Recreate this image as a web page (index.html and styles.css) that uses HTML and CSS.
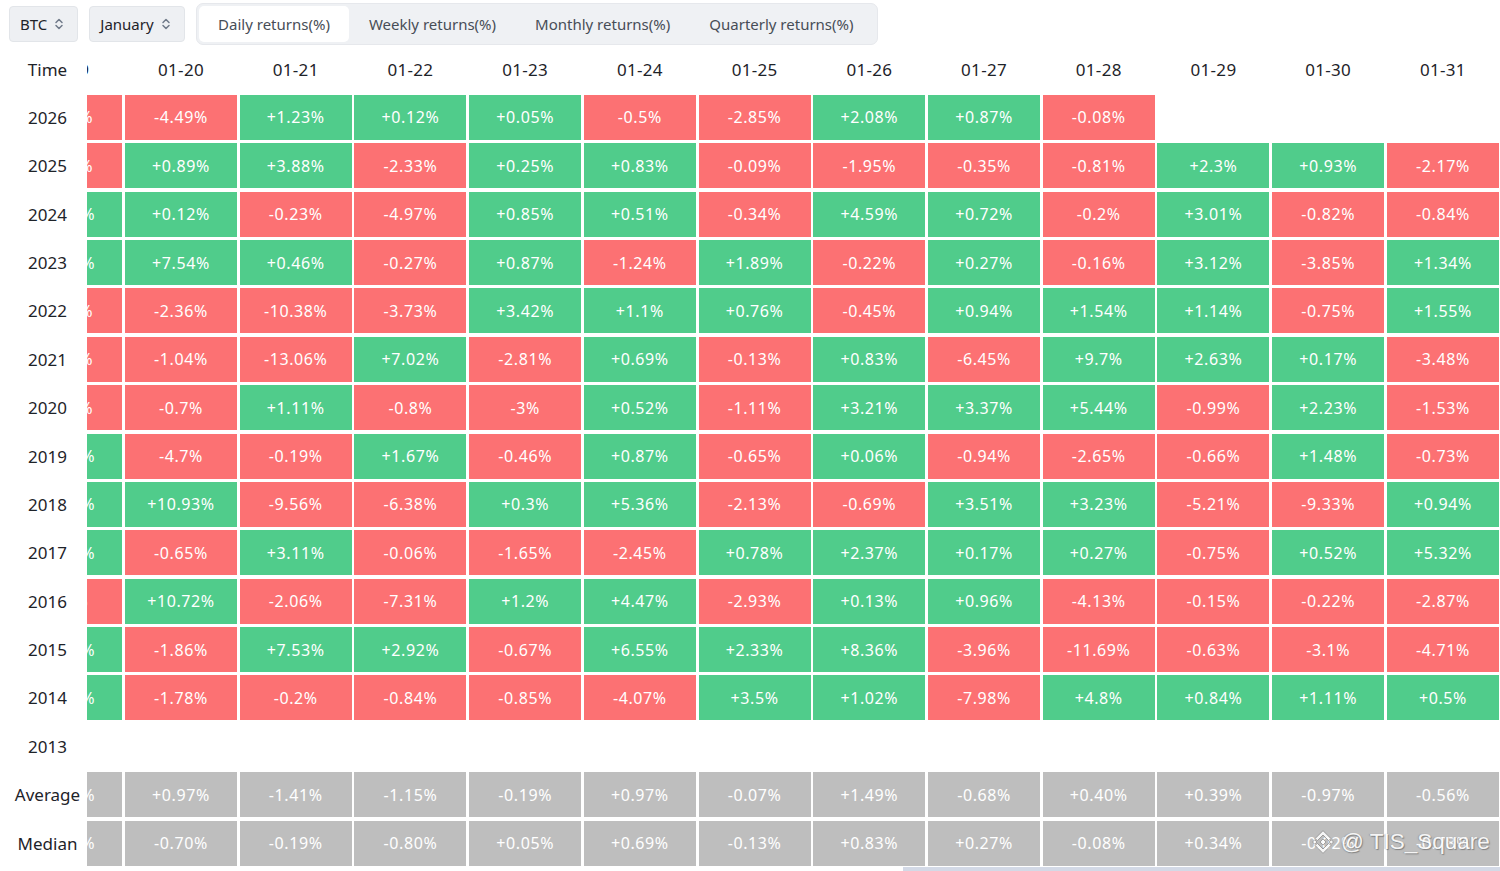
FILE: index.html
```html
<!DOCTYPE html>
<html lang="en">
<head>
<meta charset="utf-8">
<title>BTC daily returns</title>
<link rel="stylesheet" href="styles.css">
</head>
<body>
<div class="page">
  <div class="toolbar">
    <div class="select">BTC <svg class="chev" viewBox="0 0 10 14" width="10" height="14"><path d="M2 5.5 L5 2.5 L8 5.5 M2 8.5 L5 11.5 L8 8.5"/></svg></div>
    <div class="select">January <svg class="chev" viewBox="0 0 10 14" width="10" height="14"><path d="M2 5.5 L5 2.5 L8 5.5 M2 8.5 L5 11.5 L8 8.5"/></svg></div>
    <div class="tabs">
      <div class="tab active">Daily returns(%)</div>
      <div class="tab">Weekly returns(%)</div>
      <div class="tab">Monthly returns(%)</div>
      <div class="tab">Quarterly returns(%)</div>
    </div>
  </div>

  <div class="table">
    <div class="labels">
      <div class="label">Time</div>
      <div class="label">2026</div>
      <div class="label">2025</div>
      <div class="label">2024</div>
      <div class="label">2023</div>
      <div class="label">2022</div>
      <div class="label">2021</div>
      <div class="label">2020</div>
      <div class="label">2019</div>
      <div class="label">2018</div>
      <div class="label">2017</div>
      <div class="label">2016</div>
      <div class="label">2015</div>
      <div class="label">2014</div>
      <div class="label">2013</div>
      <div class="label">Average</div>
      <div class="label">Median</div>
    </div>
    <div class="viewport">
      <div class="grid">
        <div class="h">01-19</div><div class="h">01-20</div><div class="h">01-21</div><div class="h">01-22</div><div class="h">01-23</div><div class="h">01-24</div><div class="h">01-25</div><div class="h">01-26</div><div class="h">01-27</div><div class="h">01-28</div><div class="h">01-29</div><div class="h">01-30</div><div class="h">01-31</div>

        <div class="c dn">-1.83%</div><div class="c dn">-4.49%</div><div class="c up">+1.23%</div><div class="c up">+0.12%</div><div class="c up">+0.05%</div><div class="c dn">-0.5%</div><div class="c dn">-2.85%</div><div class="c up">+2.08%</div><div class="c up">+0.87%</div><div class="c dn">-0.08%</div><div class="c"></div><div class="c"></div><div class="c"></div>

        <div class="c dn">-0.62%</div><div class="c up">+0.89%</div><div class="c up">+3.88%</div><div class="c dn">-2.33%</div><div class="c up">+0.25%</div><div class="c up">+0.83%</div><div class="c dn">-0.09%</div><div class="c dn">-1.95%</div><div class="c dn">-0.35%</div><div class="c dn">-0.81%</div><div class="c up">+2.3%</div><div class="c up">+0.93%</div><div class="c dn">-2.17%</div>

        <div class="c up">+1.74%</div><div class="c up">+0.12%</div><div class="c dn">-0.23%</div><div class="c dn">-4.97%</div><div class="c up">+0.85%</div><div class="c up">+0.51%</div><div class="c dn">-0.34%</div><div class="c up">+4.59%</div><div class="c up">+0.72%</div><div class="c dn">-0.2%</div><div class="c up">+3.01%</div><div class="c dn">-0.82%</div><div class="c dn">-0.84%</div>

        <div class="c up">+0.42%</div><div class="c up">+7.54%</div><div class="c up">+0.46%</div><div class="c dn">-0.27%</div><div class="c up">+0.87%</div><div class="c dn">-1.24%</div><div class="c up">+1.89%</div><div class="c dn">-0.22%</div><div class="c up">+0.27%</div><div class="c dn">-0.16%</div><div class="c up">+3.12%</div><div class="c dn">-3.85%</div><div class="c up">+1.34%</div>

        <div class="c dn">-1.37%</div><div class="c dn">-2.36%</div><div class="c dn">-10.38%</div><div class="c dn">-3.73%</div><div class="c up">+3.42%</div><div class="c up">+1.1%</div><div class="c up">+0.76%</div><div class="c dn">-0.45%</div><div class="c up">+0.94%</div><div class="c up">+1.54%</div><div class="c up">+1.14%</div><div class="c dn">-0.75%</div><div class="c up">+1.55%</div>

        <div class="c dn">-2.61%</div><div class="c dn">-1.04%</div><div class="c dn">-13.06%</div><div class="c up">+7.02%</div><div class="c dn">-2.81%</div><div class="c up">+0.69%</div><div class="c dn">-0.13%</div><div class="c up">+0.83%</div><div class="c dn">-6.45%</div><div class="c up">+9.7%</div><div class="c up">+2.63%</div><div class="c up">+0.17%</div><div class="c dn">-3.48%</div>

        <div class="c dn">-0.92%</div><div class="c dn">-0.7%</div><div class="c up">+1.11%</div><div class="c dn">-0.8%</div><div class="c dn">-3%</div><div class="c up">+0.52%</div><div class="c dn">-1.11%</div><div class="c up">+3.21%</div><div class="c up">+3.37%</div><div class="c up">+5.44%</div><div class="c dn">-0.99%</div><div class="c up">+2.23%</div><div class="c dn">-1.53%</div>

        <div class="c up">+0.81%</div><div class="c dn">-4.7%</div><div class="c dn">-0.19%</div><div class="c up">+1.67%</div><div class="c dn">-0.46%</div><div class="c up">+0.87%</div><div class="c dn">-0.65%</div><div class="c up">+0.06%</div><div class="c dn">-0.94%</div><div class="c dn">-2.65%</div><div class="c dn">-0.66%</div><div class="c up">+1.48%</div><div class="c dn">-0.73%</div>

        <div class="c up">+2.96%</div><div class="c up">+10.93%</div><div class="c dn">-9.56%</div><div class="c dn">-6.38%</div><div class="c up">+0.3%</div><div class="c up">+5.36%</div><div class="c dn">-2.13%</div><div class="c dn">-0.69%</div><div class="c up">+3.51%</div><div class="c up">+3.23%</div><div class="c dn">-5.21%</div><div class="c dn">-9.33%</div><div class="c up">+0.94%</div>

        <div class="c up">+1.17%</div><div class="c dn">-0.65%</div><div class="c up">+3.11%</div><div class="c dn">-0.06%</div><div class="c dn">-1.65%</div><div class="c dn">-2.45%</div><div class="c up">+0.78%</div><div class="c up">+2.37%</div><div class="c up">+0.17%</div><div class="c up">+0.27%</div><div class="c dn">-0.75%</div><div class="c up">+0.52%</div><div class="c up">+5.32%</div>

        <div class="c dn">-1.9%</div><div class="c up">+10.72%</div><div class="c dn">-2.06%</div><div class="c dn">-7.31%</div><div class="c up">+1.2%</div><div class="c up">+4.47%</div><div class="c dn">-2.93%</div><div class="c up">+0.13%</div><div class="c up">+0.96%</div><div class="c dn">-4.13%</div><div class="c dn">-0.15%</div><div class="c dn">-0.22%</div><div class="c dn">-2.87%</div>

        <div class="c up">+1.44%</div><div class="c dn">-1.86%</div><div class="c up">+7.53%</div><div class="c up">+2.92%</div><div class="c dn">-0.67%</div><div class="c up">+6.55%</div><div class="c up">+2.33%</div><div class="c up">+8.36%</div><div class="c dn">-3.96%</div><div class="c dn">-11.69%</div><div class="c dn">-0.63%</div><div class="c dn">-3.1%</div><div class="c dn">-4.71%</div>

        <div class="c up">+0.63%</div><div class="c dn">-1.78%</div><div class="c dn">-0.2%</div><div class="c dn">-0.84%</div><div class="c dn">-0.85%</div><div class="c dn">-4.07%</div><div class="c up">+3.5%</div><div class="c up">+1.02%</div><div class="c dn">-7.98%</div><div class="c up">+4.8%</div><div class="c up">+0.84%</div><div class="c up">+1.11%</div><div class="c up">+0.5%</div>

        <div class="c"></div><div class="c"></div><div class="c"></div><div class="c"></div><div class="c"></div><div class="c"></div><div class="c"></div><div class="c"></div><div class="c"></div><div class="c"></div><div class="c"></div><div class="c"></div><div class="c"></div>

        <div class="c avg">+0.31%</div><div class="c avg">+0.97%</div><div class="c avg">-1.41%</div><div class="c avg">-1.15%</div><div class="c avg">-0.19%</div><div class="c avg">+0.97%</div><div class="c avg">-0.07%</div><div class="c avg">+1.49%</div><div class="c avg">-0.68%</div><div class="c avg">+0.40%</div><div class="c avg">+0.39%</div><div class="c avg">-0.97%</div><div class="c avg">-0.56%</div>

        <div class="c avg">+0.15%</div><div class="c avg">-0.70%</div><div class="c avg">-0.19%</div><div class="c avg">-0.80%</div><div class="c avg">+0.05%</div><div class="c avg">+0.69%</div><div class="c avg">-0.13%</div><div class="c avg">+0.83%</div><div class="c avg">+0.27%</div><div class="c avg">-0.08%</div><div class="c avg">+0.34%</div><div class="c avg">-0.02%</div><div class="c avg">-0.78%</div>
      </div>
      <div class="scrollbar"><div class="thumb"></div></div>
    </div>
  </div>

  <div class="watermark">
    <svg class="wm-logo" viewBox="0 0 32 32" width="28" height="28">
      <polygon points="16,3 25,12 22.5,14.5 16,8 9.5,14.5 7,12"/>
      <polygon points="16,29 25,20 22.5,17.5 16,24 9.5,17.5 7,20"/>
      <polygon points="4,16 6.5,13.5 9,16 6.5,18.5"/>
      <polygon points="28,16 25.5,13.5 23,16 25.5,18.5"/>
      <polygon points="16,12.5 19.5,16 16,19.5 12.5,16"/>
    </svg>
    <span class="wm-text">@ TIS_Square</span>
  </div>
</div>
</body>
</html>
```
FILE: styles.css
```css
html, body {
  margin: 0;
  padding: 0;
  background: #ffffff;
}

body {
  font-family: "Noto Sans", "Open Sans", sans-serif;
  color: #1e2329;
  overflow: hidden;
}

.page {
  position: relative;
  width: 1500px;
  height: 871px;
  box-sizing: border-box;
  padding-left: 8px;
}

/* ---------- toolbar ---------- */
.toolbar {
  display: flex;
  align-items: center;
  height: 42px;
  padding-top: 3px;
}

.select {
  display: flex;
  align-items: center;
  gap: 7px;
  height: 36px;
  box-sizing: border-box;
  padding: 0 13px 0 10px;
  background: #eef0f3;
  border: 1px solid #e2e5e9;
  border-radius: 4px;
  font-size: 15px;
  color: #1e2329;
  margin-left: 1px;
}

.select + .select {
  margin-left: 11px;
}

.chev {
  fill: none;
  stroke: #707a8a;
  stroke-width: 1.5;
  stroke-linecap: round;
  stroke-linejoin: round;
}

.tabs {
  display: flex;
  align-items: center;
  height: 42px;
  box-sizing: border-box;
  margin-left: 11px;
  padding: 0 4px 0 2px;
  background: #eff1f4;
  border: 1px solid #e6e8ec;
  border-radius: 7px;
}

.tab {
  display: flex;
  align-items: center;
  height: 36px;
  padding: 0 19.5px;
  font-size: 15px;
  color: #474d57;
  border-radius: 5px;
}

.tab.active {
  background: #ffffff;
}

/* ---------- table ---------- */
.table {
  display: flex;
  margin-top: 1.6px;
}

.labels {
  flex: none;
  width: 79px;
  display: grid;
  grid-auto-rows: 45px;
  row-gap: 3.38px;
}

.label,
.h {
  display: flex;
  align-items: center;
  justify-content: center;
  font-size: 17px;
  color: #1e2329;
  white-space: nowrap;
}

.h {
  letter-spacing: 0.3px;
}

.viewport {
  flex: 1;
  min-width: 0;
  overflow: hidden;
}

.grid {
  display: grid;
  grid-template-columns: repeat(13, 112px);
  column-gap: 2.73px;
  grid-auto-rows: 45px;
  row-gap: 3.38px;
  margin-left: -76.73px;
}

.c {
  display: flex;
  align-items: center;
  justify-content: center;
  font-size: 16px;
  letter-spacing: 0.6px;
  color: #ffffff;
  white-space: nowrap;
}

.c.up {
  background: #50cc8b;
}

.c.dn {
  background: #fc7173;
}

.c.avg {
  background: #bebebe;
}

.scrollbar {
  height: 4px;
  margin-top: 1.3px;
}

.thumb {
  margin-left: 816px;
  height: 4px;
  background: #d3d9e6;
}

/* ---------- watermark overlay ---------- */
.watermark {
  position: absolute;
  left: 1309px;
  top: 828px;
  display: flex;
  align-items: center;
  gap: 4px;
  opacity: 0.85;
  pointer-events: none;
}

.wm-logo polygon {
  fill: #ffffff;
  stroke: #8a8a8a;
  stroke-width: 1;
}

.wm-text {
  font-family: "Liberation Sans", sans-serif;
  font-size: 22.5px;
  color: #ffffff;
  text-shadow: 1px 1px 1px rgba(90, 90, 90, 0.7), -1px 0 1px rgba(120, 120, 120, 0.5);
  white-space: nowrap;
}
```
